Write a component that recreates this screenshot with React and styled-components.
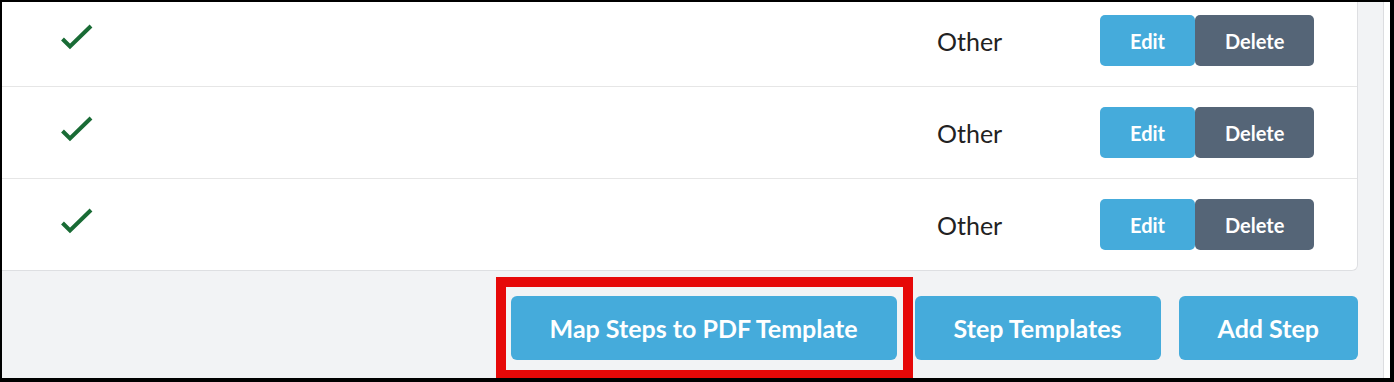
import React from 'react';
import styled, { createGlobalStyle } from 'styled-components';

const GlobalStyle = createGlobalStyle`
    html, body {
        margin: 0;
        padding: 0;
        background: #ffffff;
    }
    * {
        box-sizing: border-box;
    }
`;

const steps = [
    { id: 1, done: true, type: 'Other' },
    { id: 2, done: true, type: 'Other' },
    { id: 3, done: true, type: 'Other' },
];

function CheckMark() {
    return (
        <CheckIcon width="34" height="26" viewBox="0 0 34 26" aria-hidden="true">
            <polyline
                points="2.5,15 10,22.5 31,2"
                fill="none"
                stroke="#196b35"
                strokeWidth="4"
            />
        </CheckIcon>
    );
}

export default function App() {
    return (
        <>
            <GlobalStyle />
            <Frame>
                <Content>
                    <Card>
                        {steps.map((step) => (
                            <Row key={step.id}>
                                <Cell>{step.done && <CheckMark />}</Cell>
                                <TypeCell>{step.type}</TypeCell>
                                <Actions>
                                    <SmallButton>Edit</SmallButton>
                                    <SmallButton $variant="dark">Delete</SmallButton>
                                </Actions>
                            </Row>
                        ))}
                    </Card>
                    <Footer>
                        <Highlighted>
                            <BigButton>Map Steps to PDF Template</BigButton>
                        </Highlighted>
                        <BigButton>Step Templates</BigButton>
                        <BigButton>Add Step</BigButton>
                    </Footer>
                </Content>
                <Gutter />
            </Frame>
        </>
    );
}

const Frame = styled.div`
    width: 1394px;
    height: 382px;
    border-style: solid;
    border-color: #000000;
    border-width: 2px 4px 4px 2px;
    display: flex;
    overflow: hidden;
    background: #ffffff;
    font-family: Lato, "Open Sans", sans-serif;
`;

const Content = styled.div`
    width: 1382px;
    height: 100%;
    background: #f2f3f5;
    border-right: 1px solid #dcdde0;
    padding-right: 25px;
    flex-shrink: 0;
`;

const Gutter = styled.div`
    flex: 1;
    background: #ffffff;
`;

const Card = styled.div`
    margin-top: -8px;
    background: #ffffff;
    border: 1px solid #dedfe2;
    border-left: none;
    border-radius: 0 6px 6px 0;
`;

const Row = styled.div`
    height: 92px;
    display: grid;
    grid-template-columns: 877px 163px auto;
    align-items: center;
    padding-left: 58px;
    border-bottom: 1px solid #e6e6e6;

    &:last-child {
        height: 91px;
        border-bottom: none;
    }
`;

const Cell = styled.div`
    display: flex;
    align-items: center;
`;

const CheckIcon = styled.svg`
    display: block;
    margin-bottom: 8px;
`;

const TypeCell = styled.div`
    font-size: 25px;
    line-height: 30px;
    color: #222222;
`;

const Actions = styled.div`
    display: flex;
`;

const SmallButton = styled.button`
    height: 51px;
    padding: 0 30px;
    border: none;
    border-radius: 5px;
    background: ${(p) => (p.$variant === 'dark' ? '#556577' : '#45abdb')};
    color: #ffffff;
    font-family: Lato, "Open Sans", sans-serif;
    font-weight: 700;
    font-size: 20px;
    cursor: pointer;
`;

const Footer = styled.div`
    display: flex;
    justify-content: flex-end;
    gap: 18px;
    margin-top: 25px;
`;

const Highlighted = styled.div`
    position: relative;
    display: flex;

    &::after {
        content: '';
        position: absolute;
        top: -19px;
        left: -15px;
        right: -16px;
        bottom: -20px;
        border: 10px solid #e60808;
        pointer-events: none;
    }
`;

const BigButton = styled.button`
    height: 64px;
    padding: 0 39px;
    border: none;
    border-radius: 6px;
    background: #45abdb;
    color: #ffffff;
    font-family: Lato, "Open Sans", sans-serif;
    font-weight: 700;
    font-size: 25px;
    cursor: pointer;
`;
